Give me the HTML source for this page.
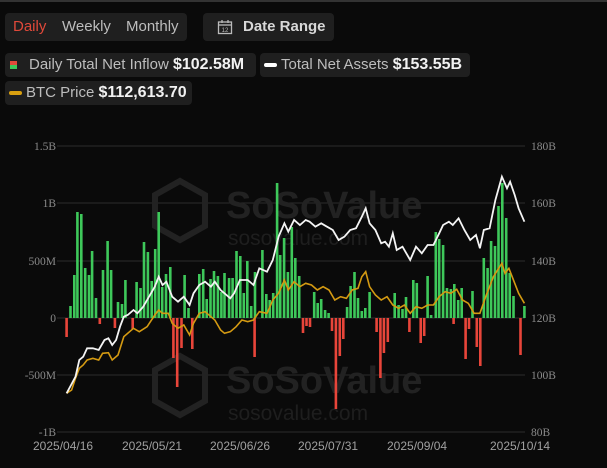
<!DOCTYPE html>
<html><head><meta charset="utf-8"><style>
*{margin:0;padding:0;box-sizing:border-box}
body{width:607px;height:468px;background:#0a0a0a;overflow:hidden;position:relative;font-family:"Liberation Sans",sans-serif}
.box{position:absolute;background:#1f1f1f;border-radius:4px;color:#bdbdbd;font-size:15px;line-height:28px;white-space:nowrap}
.b{color:#f2f2f2;font-weight:bold;font-size:16px}
.ax{font-family:"Liberation Serif",serif;font-size:11.5px;fill:#8a8a8a}
.dt{font-size:12px;fill:#a0a0a0}
.wm{font-weight:bold;fill:#222}
</style></head><body>
<div style="position:absolute;left:0;top:0;width:607px;height:2px;background:#333"></div>
<div class="box" style="left:5px;top:13px;width:182px;height:28px">
<span style="position:absolute;left:8px;color:#e0493a">Daily</span>
<span style="position:absolute;left:57px">Weekly</span>
<span style="position:absolute;left:121px">Monthly</span></div>
<div class="box" style="left:203px;top:13px;width:131px;height:28px">
<svg style="position:absolute;left:14px;top:6px" width="16" height="16" viewBox="0 0 16 16" fill="none" stroke="#bbb" stroke-width="1.3"><rect x="1.5" y="3" width="13" height="11.5"/><line x1="1.5" y1="6" x2="14.5" y2="6"/><line x1="5" y1="1" x2="5" y2="4"/><line x1="11" y1="1" x2="11" y2="4"/><text x="8" y="13" font-size="6" fill="#bbb" stroke="none" text-anchor="middle" font-family="Liberation Sans">12</text></svg>
<span class="b" style="position:absolute;left:40px;color:#d8d8d8;font-size:15px">Date Range</span></div>
<div class="box" style="left:5px;top:53px;width:251px;height:24px;line-height:24px">
<span style="position:absolute;left:5px;top:8px;width:7px;height:8px;background:linear-gradient(#e04a3a 50%,#3cc85a 50%)"></span>
<span style="position:absolute;left:24px">Daily Total Net Inflow <span class="b">$102.58M</span></span></div>
<div class="box" style="left:260px;top:53px;width:210px;height:24px;line-height:24px">
<span style="position:absolute;left:4px;top:10px;width:13px;height:4px;border-radius:2px;background:#fff"></span>
<span style="position:absolute;left:21px">Total Net Assets <span class="b">$153.55B</span></span></div>
<div class="box" style="left:5px;top:81px;width:187px;height:24px;line-height:24px">
<span style="position:absolute;left:4px;top:10px;width:13px;height:4px;border-radius:2px;background:#d9a010"></span>
<span style="position:absolute;left:21px">BTC Price <span class="b">$112,613.70</span></span></div>
<svg style="position:absolute;left:0;top:0" width="607" height="468">
<g stroke="#2c2c2c" stroke-width="1">
<line x1="57" y1="146" x2="525" y2="146"/><line x1="57" y1="203" x2="525" y2="203"/><line x1="57" y1="261" x2="525" y2="261"/><line x1="57" y1="318" x2="525" y2="318"/><line x1="57" y1="375" x2="525" y2="375"/><line x1="57" y1="432" x2="525" y2="432"/></g>
<g fill="none" stroke="#222" stroke-width="6"><path d="M180 181 L205 195 L205 226 L180 240 L155 226 L155 195 Z"/><path d="M180 356 L205 370 L205 401 L180 415 L155 401 L155 370 Z"/></g>
<text class="wm" x="226" y="218" font-size="38">SoSoValue</text>
<text x="228" y="245" font-size="21" fill="#1e1e1e">sosovalue.com</text>
<text class="wm" x="226" y="393" font-size="38">SoSoValue</text>
<text x="228" y="420" font-size="21" fill="#1e1e1e">sosovalue.com</text>
<g class="ax" text-anchor="end"><text x="56" y="150">1.5B</text><text x="56" y="207">1B</text><text x="56" y="265">500M</text><text x="56" y="322">0</text><text x="56" y="379">-500M</text><text x="56" y="436">-1B</text></g>
<g class="ax"><text x="531" y="150">180B</text><text x="531" y="207">160B</text><text x="531" y="265">140B</text><text x="531" y="322">120B</text><text x="531" y="379">100B</text><text x="531" y="436">80B</text></g>
<g class="dt"><text x="33" y="450">2025/04/16</text><text x="122" y="450">2025/05/21</text><text x="210" y="450">2025/06/26</text><text x="298" y="450">2025/07/31</text><text x="387" y="450">2025/09/04</text><text x="490" y="450">2025/10/14</text></g>
<path stroke="#3ec85a" stroke-width="2.6" fill="none" d="M70.5 318V306M74.3 318V275M77.4 318V212M81.3 318V214M85.2 318V268M89 318V275M92.1 318V251M96 318V298M103 318V270M107.6 318V241M111.1 318V270M118 318V302M122 318V304M125.4 318V280M136.6 318V282M140.5 318V288M144 318V242M147.9 318V252M151.7 318V281M155.2 318V249M158.7 318V212M162.2 318V287M166 318V274M170.3 318V267M184.6 318V275M188.5 318V308M199.3 318V274M203.2 318V269M206.7 318V299M210.5 318V279M214 318V271M217.9 318V276M221.4 318V292M224.5 318V273M229.1 318V278M232.6 318V278M236.5 318V251M240.3 318V256M243.8 318V293M247.3 318V261M251.2 318V306M255 318V272M262.4 318V250M266.3 318V294M269.7 318V300M273.2 318V293M277.1 318V183M280.2 318V255M284.1 318V238M287.9 318V272M291.8 318V227M295.3 318V258M299.2 318V276M314.2 318V292M317.7 318V303M321.2 318V299M325.1 318V310M328.6 318V313M347.1 318V307M350.6 318V286M354.5 318V272M358 318V298M361.8 318V311M365.3 318V308M369.6 318V292M394.7 318V293M398.6 318V305M402.5 318V309M406 318V297M413.3 318V280M416.8 318V283M427.6 318V276M431.1 318V315M435.8 318V232M439.2 318V239M443.1 318V245M447 318V288M450.9 318V289M454.3 318V284M458.2 318V300M461.7 318V288M472.5 318V291M483.8 318V258M487.6 318V268M491.1 318V241M495 318V246M498.5 318V206M502.3 318V183M506.2 318V218M509.7 318V273M513.5 318V296M524.4 318V306"/>
<path stroke="#e8453a" stroke-width="2.6" fill="none" d="M66.6 318V337M99.8 318V324M114.9 318V328M132.7 318V329M173.4 318V358M177.2 318V387M181.5 318V348M192.3 318V349M254.6 318V357M303 318V333M306.5 318V326M310 318V327M332 318V331M335.9 318V409M339.8 318V356M343.3 318V339M376.6 318V332M380.4 318V378M383.9 318V353M387.8 318V342M409.4 318V332M420.7 318V343M424.2 318V336M453.6 318V324M465.6 318V359M469 318V329M476.8 318V347M480.3 318V366M520.5 318V355"/>
<polyline fill="none" stroke="#d49a12" stroke-width="1.6" points="66.6,393.3 71.6,390 75.5,378.3 79.3,368.3 83.2,365 87.1,360 92.9,358.3 98.7,360 102.6,353.3 108.4,352.7 112.2,360 118,355 123.8,336.7 129.6,331.7 133.5,328.3 139.3,331.7 147.1,326.7 154.8,315 158.7,310 162.5,313.3 168.3,313.3 172.2,323.3 178,328.3 183.8,325 189.6,335 193.5,323.3 199.3,313.3 205.1,311.7 210.9,316.7 214.8,320 220.6,330 224.5,333.3 230.3,331.7 236.1,326.7 241.9,320 247.7,321.7 253.5,320 259.3,311.7 267,313.3 272.8,300 278.6,293.3 284.4,280 288.3,290 294.1,281.7 299.9,286.7 305.7,283.3 311.5,285 317.3,290 323.1,286.7 329,290 334.8,300 340.6,296.7 346.4,298.3 352.2,290 358,288.3 361.8,276.7 365.7,271.7 369.6,286.7 375.4,295 381.2,300 387,296.7 392.8,305 398.6,308.3 404.4,305 410.2,313.3 416,306.7 421.8,308.3 427.6,305 433.4,305 439.2,296.7 445.1,291.7 450.9,293.3 456.7,289.3 462.5,300 468.3,303.3 474.1,313.3 479.9,313.3 485.7,296.7 493.4,276.7 501.9,263.3 505,273.3 508.9,268.3 512.8,278.3 518.6,293.3 524.4,303.3"/>
<polyline fill="none" stroke="#f4f4f4" stroke-width="1.8" points="66.6,393.3 75.5,376.7 79.3,360 83.2,356.7 87.1,348.3 92.9,348.3 98.7,350 104.5,340 108.4,338.3 112.2,345 116.1,340 120,326.7 123.8,316.7 127.7,315 133.5,310 137.4,313.3 143.2,306.7 149,296.7 154.8,286.7 158.7,276.7 162.5,285 166.4,281.7 172.2,296.7 178,301.7 183.8,296.7 189.6,305 193.5,293.3 199.3,285 205.1,281.7 210.9,286.7 214.8,281.7 220.6,290 224.5,293.3 230.3,298.3 234.1,293.3 239.9,280 247.7,280 253.5,285 259.3,268.3 267,271.7 272.8,260 278.6,236.7 284.4,223.3 288.3,231.7 294.1,220 299.9,225 305.7,220 309.6,221.7 315.4,226.7 321.2,223.3 327,226.7 332.8,230 338.6,240 344.4,236.7 350.2,230 356,228.3 361.8,216.7 365.7,208.3 369.6,223.3 375.4,230 381.2,243.3 385.1,241.7 388.9,246.7 392.8,233.3 396.7,250 402.5,246.7 410.2,260 416,246.7 421.8,253.3 427.6,245 433.4,245 439.2,233.3 443.1,225 448.9,221.7 452.8,225 458.6,218.3 464.4,230 470.2,240 476,235 479.9,248.3 483.8,230 489.6,228.3 495.4,200 501.9,176.7 507,188.3 510.1,181.7 514.7,195 518.6,208.3 524.4,221.7"/>
</svg>
</body></html>
